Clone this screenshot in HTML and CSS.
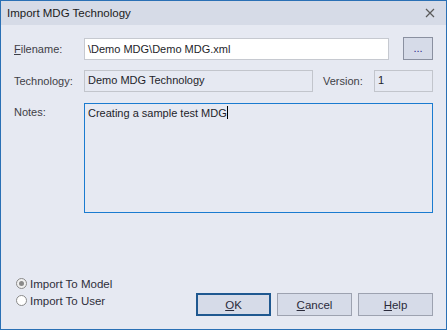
FILE: index.html
```html
<!DOCTYPE html>
<html>
<head>
<meta charset="utf-8">
<link rel="stylesheet" href="styles.css">
</head>
<body>
<div class="window">
  <div class="titlebar">
    <span class="title">Import MDG Technology</span>
    <svg class="close" width="10" height="10" viewBox="0 0 10 10"><path d="M1 1 L9 9 M9 1 L1 9" stroke="#5a5a5a" stroke-width="1.2" fill="none"/></svg>
  </div>
  <div class="content">
    <div class="row row-file">
      <span class="label"><u>F</u>ilename:</span>
      <div class="field input-white file-field">\Demo MDG\Demo MDG.xml</div>
      <div class="btn browse">...</div>
    </div>
    <div class="row row-tech">
      <span class="label">Technology:</span>
      <div class="field readonly tech-field">Demo MDG Technology</div>
      <span class="label version-label">Version:</span>
      <div class="field readonly version-field">1</div>
    </div>
    <div class="row row-notes">
      <span class="label notes-label">Notes:</span>
      <div class="notes">Creating a sample test MDG<span class="caret"></span></div>
    </div>
    <div class="bottom">
      <div class="radios">
        <div class="radio"><span class="dot checked"></span>Import To Model</div>
        <div class="radio"><span class="dot"></span>Import To User</div>
      </div>
      <div class="buttons">
        <div class="btn push default"><u>O</u>K</div>
        <div class="btn push"><u>C</u>ancel</div>
        <div class="btn push"><u>H</u>elp</div>
      </div>
    </div>
  </div>
</div>
</body>
</html>
```
FILE: styles.css
```css
html, body { margin: 0; padding: 0; }
body { width: 447px; height: 330px; overflow: hidden; background: #e6e9f2; }
.window {
  width: 447px; height: 330px; box-sizing: border-box;
  border: 1px solid #2a70b5; background: #e6e9f2;
  display: flex; flex-direction: column;
  font-family: "Liberation Sans", Arial, sans-serif; font-size: 11px; color: #3a3a3a;
}
.titlebar {
  height: 24px; background: #d6dbe7; display: flex; align-items: center;
  justify-content: space-between; padding: 0 11px 0 6px; flex-shrink: 0;
}
.title { font-size: 11.5px; color: #1c1c1c; }
.close { display: block; }
.content {
  flex: 1; display: flex; flex-direction: column;
  padding: 12px 13px 13px 13px;
}
.row { display: flex; align-items: center; }
.label { width: 70px; flex-shrink: 0; color: #3e3e46; }
.field {
  box-sizing: border-box; height: 22px; padding: 3px 2px 0 3px; color: #1e1e2a;
  white-space: nowrap; overflow: hidden;
}
.input-white { background: #ffffff; border: 1px solid #c6c9d0; }
.readonly { background: #e6e9f2; border: 1px solid #c2c5cc; }
.file-field { width: 305px; margin-top: 1px; padding-top: 4px; }
.browse {
  box-sizing: border-box; width: 30px; height: 23px; margin-left: 14px;
  background: #d6dbe8; border: 1px solid #8a90a0; display: flex; align-items: center; justify-content: center;
  color: #2a2a8a; font-size: 11px; padding-bottom: 2px;
}
.row-tech { margin-top: 10px; }
.tech-field { width: 229px; }
.version-label { width: auto; margin-left: 10px; margin-right: 0; flex: 1; }
.version-field { width: 59px; }
.row-notes { margin-top: 11px; align-items: flex-start; }
.notes-label { padding-top: 3px; }
.notes {
  box-sizing: border-box; width: 349px; height: 110px;
  border: 1px solid #1a7bd0; background: #e6e9f2; padding: 2px 3px;
  color: #1e1e2a;
}
.caret { display: inline-block; width: 1px; height: 13px; background: #000; vertical-align: -2px; }
.bottom { margin-top: auto; display: flex; justify-content: space-between; align-items: flex-end; }
.radios { display: flex; flex-direction: column; padding-left: 2px; margin-bottom: 7px; }
.radio { display: flex; align-items: center; height: 17px; color: #2e2e3a; font-size: 11.5px; }
.dot {
  box-sizing: border-box; width: 11px; height: 11px; border-radius: 50%;
  border: 1px solid #8a8a8a; background: #ffffff; margin-right: 3px; position: relative;
}
.dot.checked { background: #f0f0f0; }
.dot.checked::after {
  content: ""; position: absolute; left: 2px; top: 2px; width: 5px; height: 5px;
  border-radius: 50%; background: #8a8a8a;
}
.buttons { display: flex; gap: 6px; }
.push {
  box-sizing: border-box; width: 75px; height: 23px; background: #d6dbe8;
  border: 1px solid #9da2b0; display: flex; align-items: center; justify-content: center;
  color: #2a2a3a; font-size: 11.5px;
}
.push.default { border: 2px solid #1f5890; }
```
